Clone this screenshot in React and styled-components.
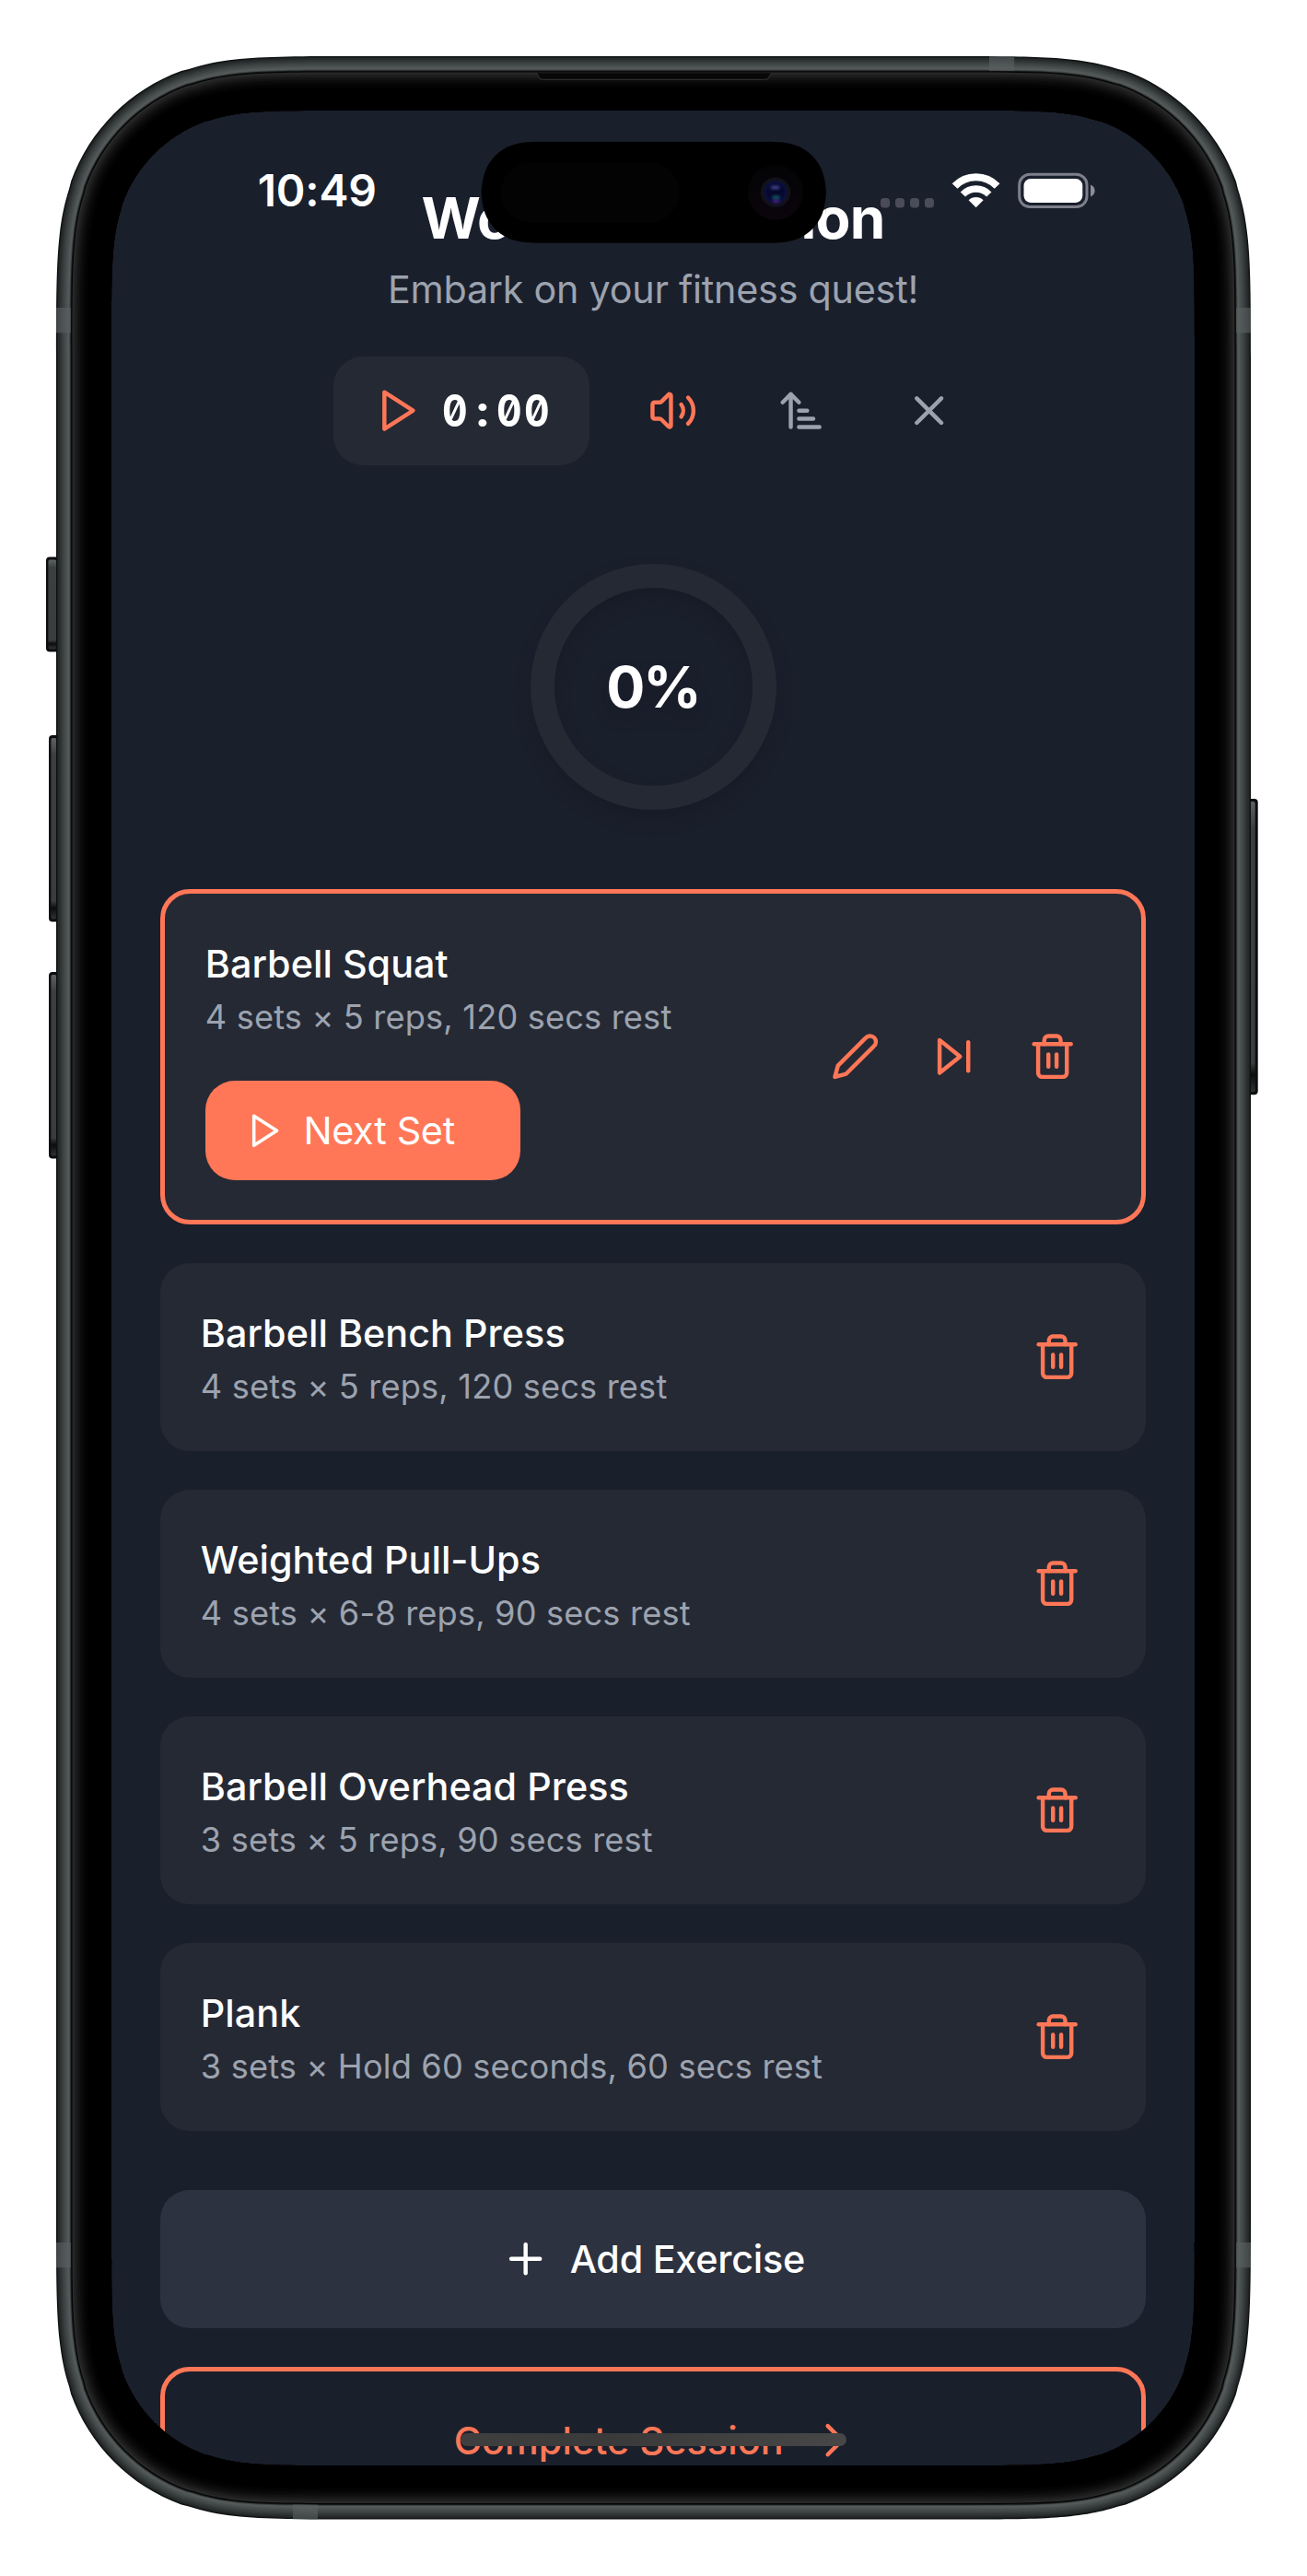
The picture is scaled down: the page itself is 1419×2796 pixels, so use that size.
import React from 'react';
import styled, { createGlobalStyle, css } from 'styled-components';
import { Trash2, Volume2, ArrowUpNarrowWide, X, Plus, ArrowRight } from 'lucide-react';

const color = {
  bg: '#1a1f2c',
  card: '#252934',
  raised: '#2d3240',
  accent: '#ff7757',
  muted: '#9ca3af',
};

const GlobalStyle = createGlobalStyle`
  *, *::before, *::after { box-sizing: border-box; }
  body { margin: 0; background: #fff; }
  button { font: inherit; border: 0; padding: 0; background: none; color: inherit; }
  p, h1, h2 { margin: 0; }
`;

/* ---------- device geometry ---------- */

// Rounded rectangle with continuous (smoothed) corners.
function smoothRect(x, y, w, h, r) {
  const a = 1.528665 * r, b = 1.088493 * r, c = 0.868407 * r, d = 0.669934 * r, e = 0.065496 * r;
  const f = 0.631494 * r, g = 0.074911 * r, i = 0.372824 * r, j = 0.16906 * r;
  const R = x + w, B = y + h;
  return [
    `M${x + a} ${y}H${R - a}`,
    `C${R - b} ${y} ${R - c} ${y} ${R - d} ${y + e}L${R - f} ${y + g}`,
    `C${R - i} ${y + j} ${R - j} ${y + i} ${R - g} ${y + f}L${R - e} ${y + d}`,
    `C${R} ${y + c} ${R} ${y + b} ${R} ${y + a}V${B - a}`,
    `C${R} ${B - b} ${R} ${B - c} ${R - e} ${B - d}L${R - g} ${B - f}`,
    `C${R - j} ${B - i} ${R - i} ${B - j} ${R - f} ${B - g}L${R - d} ${B - e}`,
    `C${R - c} ${B} ${R - b} ${B} ${R - a} ${B}H${x + a}`,
    `C${x + b} ${B} ${x + c} ${B} ${x + d} ${B - e}L${x + f} ${B - g}`,
    `C${x + i} ${B - j} ${x + j} ${B - i} ${x + g} ${B - f}L${x + e} ${B - d}`,
    `C${x} ${B - c} ${x} ${B - b} ${x} ${B - a}V${y + a}`,
    `C${x} ${y + b} ${x} ${y + c} ${x + e} ${y + d}L${x + g} ${y + f}`,
    `C${x + j} ${y + i} ${x + i} ${y + j} ${x + f} ${y + g}L${x + d} ${y + e}`,
    `C${x + c} ${y} ${x + b} ${y} ${x + a} ${y}Z`,
  ].join('');
}

const inset = (n) => smoothRect(61 + n, 61 + n, 1297 - 2 * n, 2673.5 - 2 * n, 215 - n);
const screenPath = smoothRect(121, 120, 1176, 2556, 160);

// Tones of the metal band, outermost first: [distance from the edge, fill].
const metal = [
  [0, '#0d1010'], [1, '#1a1e1e'], [2, '#262a2b'], [4, '#303435'], [6, '#393e3f'],
  [8, '#424748'], [10, '#4a4f50'], [12, '#535859'], [14.5, '#404445'], [15.5, '#161818'],
  [16.5, '#030404'], [17.5, '#2b2c2c'], [18.5, '#252525'], [20, '#1f1f1f'], [22, '#181818'],
  [24, '#121212'], [26, '#0c0c0c'], [28.5, '#070707'], [31, '#030303'], [34, '#000'],
];

/* ---------- styled parts ---------- */

const Stage = styled.div`
  position: relative;
  width: 1419px;
  height: 2796px;
  padding: 120px 122px 120px 121px;
  background: #fff;
  overflow: hidden;
  font-family: Inter, 'Liberation Sans', sans-serif;
  color: #fff;
`;

const Screen = styled.main`
  height: 2556px;
  padding: 74px 53.33px 0;
  border-radius: 120px;
  background: ${color.bg};
  overflow: hidden;
`;

const FrameArt = styled.svg`
  position: absolute;
  inset: 0;
  pointer-events: none;
`;

const StatusBar = styled.div`
  position: absolute;
  top: 180px;
  left: 279.7px;
  width: 909px;
  height: 54px;
  display: flex;
  align-items: center;
  justify-content: space-between;
`;

const Clock = styled.time`
  font-size: 48px;
  font-weight: 600;
  line-height: 54px;
  letter-spacing: -0.16px;
`;

const HomeBar = styled.div`
  position: absolute;
  left: 500px;
  top: 2641px;
  width: 419px;
  height: 13.6px;
  border-radius: 7px;
  background: linear-gradient(90deg, #3f3f3f, #3a3a3a 40%, #474747);
`;

const Header = styled.header`
  display: flex;
  flex-direction: column;
  align-items: center;
`;

const Title = styled.h1`
  font-size: 62px;
  font-weight: 700;
  line-height: 85px;
  letter-spacing: -0.75px;
`;

const Subtitle = styled.p`
  margin-top: 3px;
  font-size: 41.3px;
  line-height: 64px;
  letter-spacing: -0.25px;
  color: ${color.muted};
`;

const Toolbar = styled.div`
  display: flex;
  align-items: center;
  gap: 42.67px;
  margin-top: 41px;
`;

const Timer = styled.button`
  display: flex;
  align-items: center;
  gap: 21.33px;
  height: 118px;
  padding: 0 42.67px;
  border-radius: 32px;
  background: ${color.card};
`;

const TimerText = styled.span`
  display: flex;
  font-size: 48px;
  font-weight: 700;
  line-height: 64px;
  font-feature-settings: 'zero', 'tnum';
`;

const Digit = styled.span`
  width: 29.65px;
  display: flex;
  justify-content: center;
  transform: scaleX(${(p) => (p.$narrow ? 0.89 : 1.1)});
`;

const IconButton = styled.button`
  display: grid;
  place-items: center;
  width: 96px;
  height: 96px;
  color: ${(p) => (p.$muted ? color.muted : color.accent)};
`;

const Progress = styled.div`
  display: grid;
  place-items: center;
  width: 267px;
  height: 267px;
  margin-top: 106.7px;
  border: 26.7px solid ${color.card};
  border-radius: 50%;
  font-size: 62.5px;
  font-weight: 700;
  letter-spacing: -2px;
  filter: drop-shadow(0 10px 9px rgba(20, 10, 20, 0.22));
`;

const List = styled.ul`
  display: flex;
  flex-direction: column;
  gap: 42.67px;
  margin: 86px 0 0;
  padding: 0;
  list-style: none;
`;

const Card = styled.li`
  display: flex;
  align-items: center;
  justify-content: space-between;
  height: 203.3px;
  padding: 0 42.67px;
  border-radius: 32px;
  background: ${color.card};
  ${(p) => p.$active && css`
    border: 5.33px solid ${color.accent};
    height: 364px;
  `}
`;

const Info = styled.div`
  padding: 1.5px 0 0 0.8px;
`;

const Name = styled.h2`
  font-size: 41.3px;
  font-weight: 500;
  line-height: 64px;
  letter-spacing: 0.04px;
`;

const Detail = styled.p`
  font-size: 36.2px;
  line-height: 53.4px;
  letter-spacing: 0.16px;
  color: ${color.muted};
`;

const Actions = styled.div`
  display: flex;
  gap: 10.67px;
  margin-right: 5.7px;
`;

const NextSet = styled.button`
  display: flex;
  align-items: center;
  gap: 21.33px;
  width: 342.5px;
  height: 107.3px;
  margin-top: 42px;
  padding-left: 42.67px;
  border-radius: 32px;
  background: ${color.accent};
  font-size: 41.3px;
  letter-spacing: -0.3px;
`;

const WideButton = styled.button`
  display: flex;
  align-items: center;
  justify-content: center;
  gap: 21.33px;
  width: 100%;
  border-radius: 32px;
  font-size: 41.3px;
  font-weight: 500;
`;

const AddButton = styled(WideButton)`
  height: 150px;
  margin-top: 64px;
  background: ${color.raised};
  letter-spacing: -0.24px;
`;

const CompleteButton = styled(WideButton)`
  height: 160px;
  margin-top: 42.67px;
  border: 5.33px solid ${color.accent};
  color: ${color.accent};
  letter-spacing: 0.08px;
`;

const StatusIcons = styled.svg`
  display: block;
`;

/* ---------- icons ---------- */

const ICON = 53.33;

const Stroke = ({ size = ICON, color: c = 'currentColor', children }) => (
  <svg width={size} height={size} viewBox="0 0 24 24" fill="none" stroke={c} strokeWidth="2" strokeLinecap="round" strokeLinejoin="round">
    {children}
  </svg>
);

const PlayIcon = (p) => <Stroke {...p}><polygon points="6 3 20 12 6 21 6 3" /></Stroke>;
const SkipIcon = () => (
  <Stroke><polygon points="5 4 15 12 5 20 5 4" /><line x1="19" x2="19" y1="5" y2="19" /></Stroke>
);
const PencilIcon = () => (
  <Stroke><path d="M17 3a2.85 2.83 0 1 1 4 4L7.5 20.5 2 22l1.5-5.5Z" /></Stroke>
);

const SignalWifiBattery = () => (
  <StatusIcons width="233" height="42" viewBox="956 185 233 42">
    <g fill="#4a4d59">
      {[0, 1, 2, 3].map((i) => <rect key={i} x={956 + i * 16} y="214" width="10" height="10.4" rx="3.6" />)}
    </g>
    <g fill="none" stroke="#fff">
      <path d="M1036.6 201A32 32 0 0 1 1082.6 201" strokeWidth="8" />
      <path d="M1045.4 210A19.8 19.8 0 0 1 1073.8 210" strokeWidth="7.4" />
    </g>
    <path d="M1059.6 224.3L1051.6 216.2A11.4 11.4 0 0 1 1067.6 216.2Z" fill="#fff" />
    <rect x="1106.7" y="188.2" width="73.3" height="35.4" rx="11.5" fill="none" stroke="#7d808a" strokeWidth="3" />
    <rect x="1111.5" y="193" width="63.8" height="26" rx="7.4" fill="#fff" />
    <path d="M1184 199.5C1187.3 201 1188.6 203.4 1188.6 206C1188.6 208.6 1187.3 211 1184 212.5Z" fill="#8b8e97" />
  </StatusIcons>
);

const SideKey = ({ x, y, w, h, flip }) => (
  <g>
    <rect x={x} y={y} width={w + 4} height={h} rx="4" fill="#0c0e0e" transform={flip ? 'translate(-4 0)' : undefined} />
    <rect x={flip ? x - 1 : x + 2.4} y={y + 3} width={w - 2} height={h - 6} rx="2" fill="url(#key)" />
  </g>
);

const DeviceFrame = () => (
  <FrameArt width="1419" height="2796" viewBox="0 0 1419 2796">
    <defs>
      <linearGradient id="key" x1="0" x2="0" y1="0" y2="1">
        <stop offset="0" stopColor="#5d6263" />
        <stop offset="0.09" stopColor="#3b3f40" />
        <stop offset="0.9" stopColor="#3a3d3e" />
        <stop offset="0.94" stopColor="#0c0d0d" />
        <stop offset="1" stopColor="#2f3334" />
      </linearGradient>
      <radialGradient id="lens" cx="0.5" cy="0.5" r="0.5">
        <stop offset="0" stopColor="#050622" />
        <stop offset="0.5" stopColor="#060830" />
        <stop offset="0.7" stopColor="#0b0e40" />
        <stop offset="0.78" stopColor="#10121f" />
        <stop offset="1" stopColor="#0f1019" />
      </radialGradient>
      <linearGradient id="halo" x1="0" x2="0" y1="0" y2="1">
        <stop offset="0" stopColor="#030304" />
        <stop offset="1" stopColor="#0b050c" />
      </linearGradient>
      <filter id="soft" x="-1" y="-1" width="3" height="3"><feGaussianBlur stdDeviation="1.5" /></filter>
    </defs>

    <SideKey x={50} y={604.5} w={11} h={103} />
    <SideKey x={53} y={798} w={8} h={202.5} />
    <SideKey x={53} y={1055} w={8} h={202.5} />
    <SideKey x={1357.7} y={867} w={8} h={321.3} flip />

    {metal.map(([n, fill]) => (
      <path key={n} d={inset(n) + screenPath} fill={fill} fillRule="evenodd" />
    ))}

    <g fill="#5a6061" opacity="0.62">
      {[334, 2434].map((y) => (
        <React.Fragment key={y}>
          <rect x="61" y={y} width="16" height="27.3" />
          <rect x="1342" y={y} width="16" height="27.3" />
        </React.Fragment>
      ))}
      <rect x="1074" y="61" width="27.2" height="16" />
      <rect x="318" y="2718.5" width="27" height="16" />
    </g>

    <path d="M581 79.3Q583.4 79.3 584.2 82Q585.4 86.4 590 86.4H830Q834.6 86.4 835.8 82Q836.6 79.3 839 79.3" fill="#080808" stroke="#2b2b2b" strokeWidth="1.2" />

    <path d={smoothRect(522.5, 153.8, 374.5, 110, 52)} fill="#000" />
    <rect x="543.7" y="176" width="194" height="66" rx="33" fill="#030303" />
    <circle cx="842" cy="208.7" r="30" fill="url(#halo)" />
    <circle cx="842" cy="208.7" r="16.3" fill="url(#lens)" />
    <ellipse cx="841.6" cy="203.6" rx="5" ry="2" fill="#3f4488" filter="url(#soft)" />
    <ellipse cx="842.6" cy="214.4" rx="4.5" ry="2.6" fill="#0e4a5c" filter="url(#soft)" />
    <ellipse cx="842.6" cy="218.4" rx="3.6" ry="1.3" fill="#5a2090" filter="url(#soft)" />
  </FrameArt>
);

/* ---------- data ---------- */

const upcoming = [
  { name: 'Barbell Bench Press', detail: '4 sets × 5 reps, 120 secs rest' },
  { name: 'Weighted Pull-Ups', detail: '4 sets × 6-8 reps, 90 secs rest' },
  { name: 'Barbell Overhead Press', detail: '3 sets × 5 reps, 90 secs rest' },
  { name: 'Plank', detail: '3 sets × Hold 60 seconds, 60 secs rest' },
];

export default function App() {
  return (
    <>
      <GlobalStyle />
      <Stage>
        <Screen>
          <Header>
            <Title>Workout Session</Title>
            <Subtitle>Embark on your fitness quest!</Subtitle>
            <Toolbar>
              <Timer>
                <PlayIcon color={color.accent} />
                <TimerText>
                  {'0:00'.split('').map((ch, i) => <Digit key={i} $narrow={ch !== ':'}>{ch}</Digit>)}
                </TimerText>
              </Timer>
              <IconButton><Volume2 size={ICON} /></IconButton>
              <IconButton $muted><ArrowUpNarrowWide size={ICON} /></IconButton>
              <IconButton $muted><X size={ICON} /></IconButton>
            </Toolbar>
            <Progress>0%</Progress>
          </Header>

          <List>
            <Card $active>
              <Info>
                <Name>Barbell Squat</Name>
                <Detail>4 sets × 5 reps, 120 secs rest</Detail>
                <NextSet>
                  <PlayIcon size={42.67} />
                  Next Set
                </NextSet>
              </Info>
              <Actions>
                <IconButton><PencilIcon /></IconButton>
                <IconButton><SkipIcon /></IconButton>
                <IconButton><Trash2 size={ICON} /></IconButton>
              </Actions>
            </Card>
            {upcoming.map((e) => (
              <Card key={e.name}>
                <Info>
                  <Name>{e.name}</Name>
                  <Detail>{e.detail}</Detail>
                </Info>
                <Actions>
                  <IconButton><Trash2 size={ICON} /></IconButton>
                </Actions>
              </Card>
            ))}
          </List>

          <AddButton><Plus size={ICON} />Add Exercise</AddButton>
          <CompleteButton>Complete Session<ArrowRight size={ICON} /></CompleteButton>
        </Screen>

        <DeviceFrame />
        <StatusBar>
          <Clock>10:49</Clock>
          <SignalWifiBattery />
        </StatusBar>
        <HomeBar />
      </Stage>
    </>
  );
}
